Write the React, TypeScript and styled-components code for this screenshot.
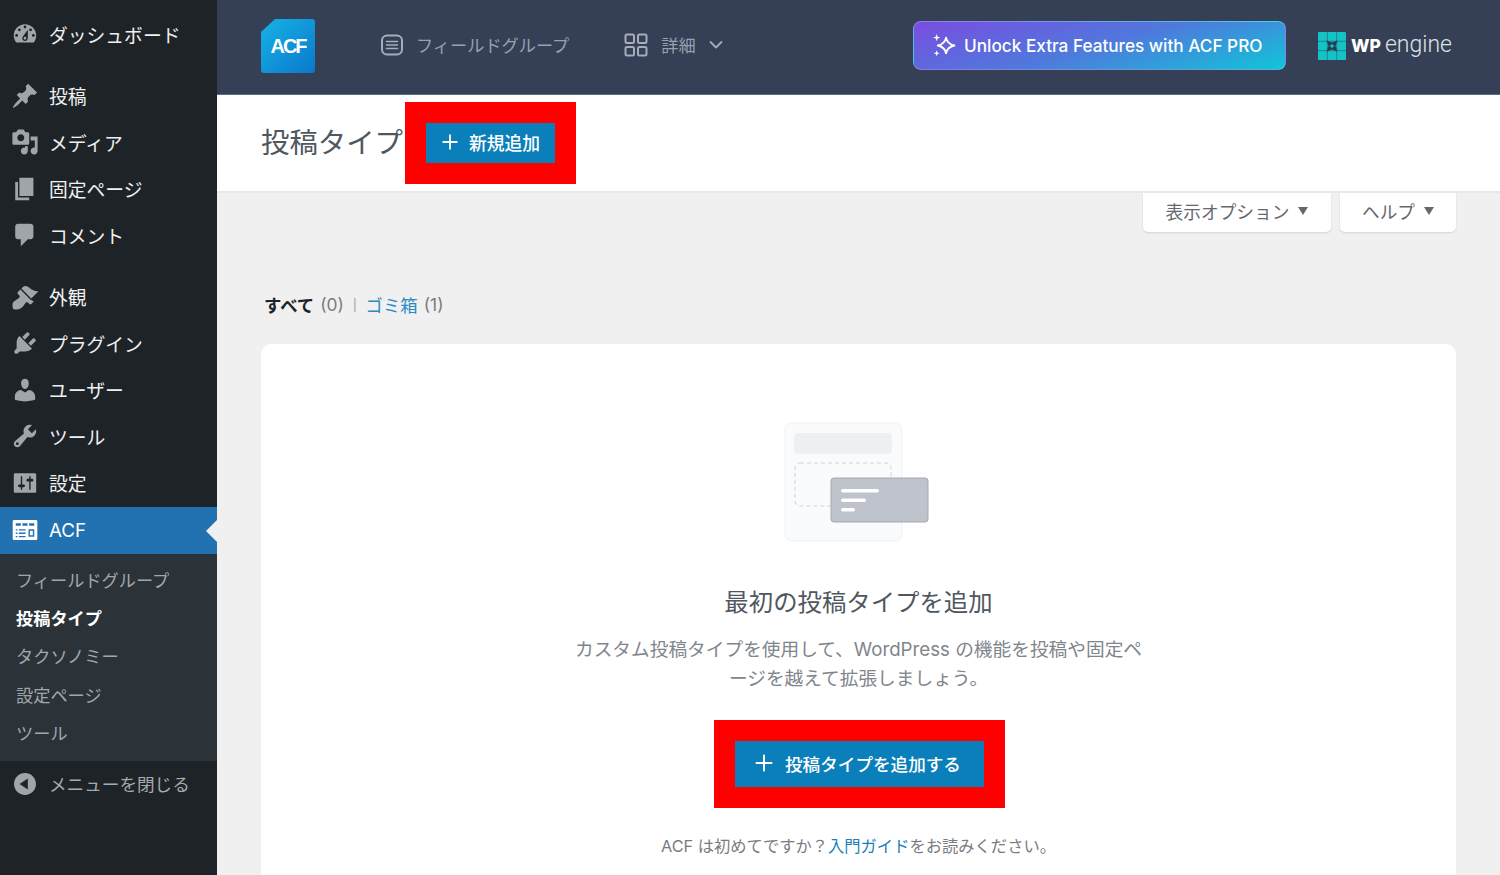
import React from 'react';
import styled, { createGlobalStyle } from 'styled-components';

const GlobalStyle = createGlobalStyle`
  html, body {
    margin: 0;
    padding: 0;
    height: 875px;
    overflow: hidden;
    background: #f0f0f1;
    font-family: Inter, "Noto Sans CJK JP", "Noto Sans", sans-serif;
  }
  * { box-sizing: border-box; }
`;

const Page = styled.div`
  display: flex;
  width: 1500px;
  height: 875px;
  overflow: hidden;
`;

/* admin menu */

const Sidebar = styled.nav`
  flex: 0 0 217px;
  background: #1d2327;
  padding-top: 12px;
  display: flex;
  flex-direction: column;
`;

const MenuGroup = styled.div`
  margin-bottom: 15px;
`;

const MenuItem = styled.div<{ $active?: boolean }>`
  position: relative;
  display: flex;
  align-items: center;
  gap: 10px;
  height: 46.5px;
  padding-left: 11px;
  padding-bottom: ${p => (p.$active ? 0 : 2)}px;
  font-size: 18.8px;
  color: ${p => (p.$active ? '#fff' : '#f0f0f1')};
  background: ${p => (p.$active ? '#2271b1' : 'transparent')};
  white-space: nowrap;
`;

const MenuIcon = styled.svg<{ $active?: boolean }>`
  flex: 0 0 28px;
  width: 28px;
  height: 28px;
  fill: ${p => (p.$active ? '#fff' : '#a0a5aa')};
`;

const ActiveArrow = styled.span`
  position: absolute;
  right: 0;
  top: 13px;
  border-style: solid;
  border-width: 11px 11px 11px 0;
  border-color: transparent #f0f0f1 transparent transparent;
`;

const SubMenu = styled.div`
  background: #2c3338;
  padding: 8.5px 0 8.5px;
`;

const SubItem = styled.div<{ $current?: boolean }>`
  height: 38.2px;
  line-height: 38.2px;
  padding-left: 16px;
  font-size: 17.2px;
  font-weight: ${p => (p.$current ? 700 : 400)};
  color: ${p => (p.$current ? '#fff' : '#a2a7ac')};
  white-space: nowrap;
`;

const CollapseItem = styled(MenuItem)`
  color: #a7aaad;
  font-size: 17.6px;
  height: 47px;
  padding-bottom: 2px;
`;

/* main column */

const Main = styled.main`
  flex: 1;
  min-width: 0;
  display: flex;
  flex-direction: column;
`;

const TopBar = styled.header`
  flex: 0 0 95px;
  display: flex;
  align-items: center;
  padding: 0 44px 3px 44px;
  background: #353f55;
  border-bottom: 1px solid #626b7e;
`;

const Logo = styled.div`
  flex: 0 0 54px;
  width: 54px;
  height: 54px;
  margin-right: 65px;
  margin-top: 1px;
  display: flex;
  align-items: center;
  justify-content: center;
  border-radius: 3px;
  background: linear-gradient(135deg, #17b3e6 0%, #0a78cc 100%);
  clip-path: polygon(26% 0, 100% 0, 100% 100%, 0 100%, 0 24%);
  color: #fff;
  font-family: "Liberation Sans", sans-serif;
  font-size: 20px;
  font-weight: 700;
  letter-spacing: -2px;
`;

const NavLink = styled.div<{ $gap: number; $end?: number }>`
  display: flex;
  align-items: center;
  gap: ${p => p.$gap}px;
  margin-right: ${p => p.$end ?? 0}px;
  padding-bottom: 2px;
  color: #98a1b0;
  font-size: 17.2px;
  white-space: nowrap;
`;

const NavIcon = styled.svg`
  width: 24px;
  height: 24px;
  fill: none;
  stroke: #a5adba;
  stroke-width: 2;
  stroke-linecap: round;
  stroke-linejoin: round;
`;

const Chevron = styled.svg`
  width: 14px;
  height: 14px;
  fill: none;
  stroke: #a5adba;
  stroke-width: 1.8;
  stroke-linecap: round;
  stroke-linejoin: round;
`;

const ProButton = styled.div`
  margin-left: auto;
  width: 373px;
  height: 49px;
  display: flex;
  align-items: center;
  gap: 7px;
  padding-left: 18px;
  border-radius: 8px;
  border: 1px solid rgba(255, 255, 255, 0.22);
  background: linear-gradient(165deg, #7a4ce0 0%, #4f79dc 50%, #0fc6d8 100%);
  color: #fff;
  font-size: 17.2px;
  font-weight: 500;
  white-space: nowrap;
`;

const Sparkle = styled.svg`
  width: 25px;
  height: 25px;
  fill: none;
  stroke: #fff;
  stroke-width: 1.8;
  stroke-linejoin: round;
`;

const WpEngine = styled.div`
  margin-left: 32px;
  display: flex;
  align-items: center;
  width: 138px;
  color: #fff;
  white-space: nowrap;
`;

const WpMark = styled.svg`
  width: 28px;
  height: 28px;
  margin-right: 5px;
`;

const WpBold = styled.span`
  font-size: 17.5px;
  font-weight: 800;
  margin-right: 4px;
`;

const WpLight = styled.span`
  font-family: Roboto, sans-serif;
  font-size: 23px;
  font-weight: 300;
  color: #dfe3e8;
  position: relative;
  top: -1px;
`;

const TitleBar = styled.div`
  flex: 0 0 98px;
  display: flex;
  align-items: center;
  padding-left: 44px;
  background: #fff;
  border-bottom: 2px solid #e8e8e9;
`;

const Title = styled.h1`
  margin: 0 2px 5px 0;
  font-size: 28.4px;
  font-weight: 400;
  color: #50575e;
  white-space: nowrap;
`;

const AddButton = styled.div<{ $large?: boolean }>`
  display: flex;
  align-items: center;
  justify-content: center;
  gap: ${p => (p.$large ? 11 : 10)}px;
  width: ${p => (p.$large ? 291 : 171)}px;
  height: ${p => (p.$large ? 88 : 82)}px;
  margin-left: ${p => (p.$large ? 2 : 0)}px;
  padding-bottom: 2px;
  padding-right: ${p => (p.$large ? 4 : 0)}px;
  border: 21px solid #ff0000;
  background: #0b7fb9;
  background-clip: padding-box;
  color: #fff;
  font-size: ${p => (p.$large ? 17.6 : 17.8)}px;
  font-weight: 500;
  white-space: nowrap;
`;

const PlusIcon = styled.svg<{ $size: number }>`
  width: ${p => p.$size}px;
  height: ${p => p.$size}px;
  stroke: #fff;
  stroke-width: 2;
  stroke-linecap: round;
`;

const Content = styled.div`
  flex: 1;
  padding: 0 44px;
  display: flex;
  flex-direction: column;
  min-height: 0;
`;

const ScreenTabs = styled.div`
  display: flex;
  justify-content: flex-end;
  gap: 9px;
`;

const ScreenTab = styled.div<{ $width: number }>`
  width: ${p => p.$width}px;
  height: 39px;
  display: flex;
  align-items: center;
  justify-content: center;
  gap: 9px;
  padding-bottom: 4px;
  background: #fff;
  border-radius: 0 0 5px 5px;
  box-shadow: 0 1px 2px rgba(0, 0, 0, 0.12);
  color: #646970;
  font-size: 17.7px;
  white-space: nowrap;
`;

const Caret = styled.span`
  width: 0;
  height: 0;
  border-style: solid;
  border-width: 8px 5.5px 0 5.5px;
  border-color: #646970 transparent transparent transparent;
`;

const SubSub = styled.div`
  display: flex;
  align-items: center;
  height: 28px;
  margin: 58px 0 26px 3px;
  font-size: 17.4px;
  color: #787c82;
  white-space: nowrap;
`;

const SubCurrent = styled.strong`
  color: #1d2327;
  font-weight: 700;
  margin-right: 6px;
`;

const SubSep = styled.span`
  margin: 0 9px;
  font-family: "Liberation Sans", sans-serif;
  font-size: 14px;
  color: #a7aaad;
`;

const SubLink = styled.span`
  color: #2a8bc2;
  margin-right: 6px;
`;

const Card = styled.section`
  flex: 1;
  display: flex;
  flex-direction: column;
  align-items: center;
  padding-top: 78px;
  background: #fff;
  border-radius: 11px 11px 0 0;
`;

const Illustration = styled.svg`
  width: 148px;
  height: 122px;
  margin-left: -2px;
  margin-bottom: 40px;
`;

const EmptyTitle = styled.h2`
  margin: 0 0 15px;
  font-size: 24.4px;
  line-height: 36px;
  font-weight: 400;
  color: #50575e;
`;

const EmptyText = styled.p`
  margin: 0 0 27px;
  text-align: center;
  font-size: 18.7px;
  line-height: 29px;
  color: #80858c;
  white-space: nowrap;
`;

const GuideText = styled.p`
  margin: 24px 0 0;
  font-size: 16.3px;
  line-height: 28px;
  color: #787c82;
  white-space: nowrap;
`;

const GuideLink = styled.span`
  color: #1a7fbd;
`;

const icons = {
  dashboard: 'M3.76 16h12.48c1.1-1.37 1.76-3.11 1.76-5 0-4.42-3.58-8-8-8s-8 3.58-8 8c0 1.89.66 3.63 1.76 5zM10 4c.55 0 1 .45 1 1s-.45 1-1 1-1-.45-1-1 .45-1 1-1zM6 6c.55 0 1 .45 1 1s-.45 1-1 1-1-.45-1-1 .45-1 1-1zm8 0c.55 0 1 .45 1 1s-.45 1-1 1-1-.45-1-1 .45-1 1-1zm-5.37 5.55L12 7v6c0 1.1-.9 2-2 2s-2-.9-2-2c0-.57.24-1.08.63-1.45zM4 10c.55 0 1 .45 1 1s-.45 1-1 1-1-.45-1-1 .45-1 1-1zm12 0c.55 0 1 .45 1 1s-.45 1-1 1-1-.45-1-1 .45-1 1-1zm-5 3c0-.55-.45-1-1-1s-1 .45-1 1 .45 1 1 1 1-.45 1-1z',
  post: 'M10.44 3.02l1.82-1.82 6.36 6.35-1.83 1.82c-1.05-.68-2.48-.57-3.41.36l-.75.75c-.92.93-1.04 2.35-.35 3.41l-1.83 1.82-2.41-2.41-2.8 2.79c-.42.42-3.38 2.71-3.8 2.29s1.86-3.39 2.28-3.81l2.79-2.79L4.1 9.36l1.83-1.82c1.05.69 2.48.57 3.4-.36l.75-.75c.93-.92 1.05-2.35.36-3.41z',
  media: 'M13 11V4c0-.55-.45-1-1-1h-1.67L9 1H5L3.67 3H2c-.55 0-1 .45-1 1v7c0 .55.45 1 1 1h10c.55 0 1-.45 1-1zM7 4.5c1.38 0 2.5 1.12 2.5 2.5S8.38 9.5 7 9.5 4.5 8.38 4.5 7 5.62 4.5 7 4.5zM14 6h5v10.5c0 1.38-1.12 2.5-2.5 2.5S14 17.88 14 16.5s1.12-2.5 2.5-2.5c.17 0 .34.02.5.05V9h-3V6zm-4 8.05V13h2v3.5c0 1.38-1.12 2.5-2.5 2.5S7 17.88 7 16.5 8.12 14 9.5 14c.17 0 .34.02.5.05z',
  page: 'M6 15V2h10v13H6zm-1 1h8v2H3V5h2v11z',
  comments: 'M5 2h9c1.1 0 2 .9 2 2v7c0 1.1-.9 2-2 2h-2l-5 5v-5H5c-1.1 0-2-.9-2-2V4c0-1.1.9-2 2-2z',
  appearance: 'M14.48 11.06L7.41 3.99l1.5-1.5c.5-.56 2.3-.47 3.51.32 1.21.8 1.43 1.28 2.91 2.1 1.18.64 2.45 1.26 4.45.85zm-.71.71L6.7 4.7 4.93 6.47c-.39.39-.39 1.02 0 1.41l1.06 1.06c.39.39.39 1.03 0 1.42-.6.6-1.43 1.11-2.21 1.69-.35.26-.7.53-1.01.84C1.43 13.23.5 15.1 1.5 18.5c3.4 1 5.27.07 6.61-1.27.31-.31.58-.66.84-1.01.58-.78 1.09-1.61 1.69-2.21.39-.39 1.03-.39 1.42 0l1.06 1.06c.39.39 1.02.39 1.41 0l1.77-1.77z',
  plugins: 'M13.11 4.36L9.87 7.6 8 5.73l3.24-3.24c.35-.34 1.05-.2 1.56.32.52.51.66 1.21.31 1.55zm-8 1.77l.91-1.12 9.01 9.01-1.19.84c-.71.71-2.63 1.16-3.82 1.16H6.14L4.9 17.26c-.59.59-1.54.59-2.12 0-.59-.58-.59-1.53 0-2.12l1.24-1.24v-3.88c0-1.13.4-3.19 1.09-3.89zm7.26 3.97l3.24-3.24c.34-.35 1.04-.21 1.55.31.52.51.66 1.21.31 1.55l-3.24 3.25z',
  users: 'M10 9.25c-2.27 0-2.73-3.44-2.73-3.44C7 4.02 7.82 2 9.97 2c2.16 0 2.98 2.02 2.71 3.81 0 0-.41 3.44-2.68 3.44zm0 2.57L12.72 10c2.39 0 4.52 2.33 4.52 4.53v2.49s-3.65 1.13-7.24 1.13c-3.65 0-7.24-1.13-7.24-1.13v-2.49c0-2.25 1.94-4.48 4.47-4.48z',
  tools: 'M16.68 9.77c-1.34 1.34-3.3 1.67-4.95.99l-5.41 6.52c-.99.99-2.59.99-3.58 0s-.99-2.59 0-3.57l6.52-5.42c-.68-1.65-.35-3.61.99-4.95 1.28-1.28 3.12-1.62 4.72-1.06l-2.89 2.89 2.82 2.82 2.86-2.87c.53 1.58.18 3.39-1.08 4.65zM3.81 16.21c.4.39 1.04.39 1.43 0 .4-.4.4-1.04 0-1.43-.39-.4-1.03-.4-1.43 0-.39.39-.39 1.03 0 1.43z',
  settings: 'M18 16V4c0-.55-.45-1-1-1H3c-.55 0-1 .45-1 1v12c0 .55.45 1 1 1h14c.55 0 1-.45 1-1zM8 11h1c.55 0 1 .45 1 1s-.45 1-1 1H8v1.5c0 .28-.22.5-.5.5s-.5-.22-.5-.5V13H6c-.55 0-1-.45-1-1s.45-1 1-1h1V5.5c0-.28.22-.5.5-.5s.5.22.5.5V11zm5-2h-1c-.55 0-1-.45-1-1s.45-1 1-1h1V5.5c0-.28.22-.5.5-.5s.5.22.5.5V7h1c.55 0 1 .45 1 1s-.45 1-1 1h-1v5.5c0 .28-.22.5-.5.5s-.5-.22-.5-.5V9z',
  collapse: 'M10 2.16c4.33 0 7.84 3.51 7.84 7.84s-3.51 7.84-7.84 7.84S2.16 14.33 2.16 10 5.71 2.16 10 2.16zm2 11.72V6.12L6.18 9.97z',
  acf: 'M2.200 2.800h15.600a1 1 0 0 1 1 1v12.400a1 1 0 0 1-1 1H2.200a1 1 0 0 1-1-1V3.800a1 1 0 0 1 1-1zM3.400 7h3.600V5.200H3.400zm4.800 0h3.600V5.200H8.200zm4.800 0h3.600V5.200H13zM3.400 10.400h1.200V9.400H3.400zm2.200 0h4.800V9.400H5.600zm-2.200 2.400h1.200v-1H3.400zm2.200 0h4.800v-1H5.600zm-2.200 2.400h1.200v-1H3.400zm2.200 0h4.800v-1H5.600zm6.900-.400h4.100V9.500h-4.100zm1-1v-3.200h2.100v3.200z',
};

type IconName = keyof typeof icons;

const DashIcon = ({ name, active }: { name: IconName; active?: boolean }) => (
  <MenuIcon viewBox="0 0 20 20" $active={active}>
    <path d={icons[name]} fillRule="evenodd" />
  </MenuIcon>
);

const Plus = ({ size }: { size: number }) => (
  <PlusIcon $size={size} viewBox="0 0 20 20">
    <path d="M10 2.500v15M2.500 10h15" />
  </PlusIcon>
);

const menuTop: [IconName, string][] = [
  ['post', '投稿'],
  ['media', 'メディア'],
  ['page', '固定ページ'],
  ['comments', 'コメント'],
];

const menuMiddle: [IconName, string][] = [
  ['appearance', '外観'],
  ['plugins', 'プラグイン'],
  ['users', 'ユーザー'],
  ['tools', 'ツール'],
  ['settings', '設定'],
];

export default function App() {
  return (
    <Page>
      <GlobalStyle />
      <Sidebar>
        <MenuGroup>
          <MenuItem><DashIcon name="dashboard" />ダッシュボード</MenuItem>
        </MenuGroup>
        <MenuGroup>
          {menuTop.map(([icon, label]) => (
            <MenuItem key={label}><DashIcon name={icon} />{label}</MenuItem>
          ))}
        </MenuGroup>
        <div>
          {menuMiddle.map(([icon, label]) => (
            <MenuItem key={label}><DashIcon name={icon} />{label}</MenuItem>
          ))}
          <MenuItem $active>
            <DashIcon name="acf" active />ACF
            <ActiveArrow />
          </MenuItem>
        </div>
        <SubMenu>
          <SubItem>フィールドグループ</SubItem>
          <SubItem $current>投稿タイプ</SubItem>
          <SubItem>タクソノミー</SubItem>
          <SubItem>設定ページ</SubItem>
          <SubItem>ツール</SubItem>
        </SubMenu>
        <CollapseItem><DashIcon name="collapse" />メニューを閉じる</CollapseItem>
      </Sidebar>

      <Main>
        <TopBar>
          <Logo>ACF</Logo>
          <NavLink $gap={12} $end={55}>
            <NavIcon viewBox="0 0 24 24">
              <rect x="2" y="2.500" width="20" height="19" rx="5" />
              <path d="M6.500 8.500h11M6.500 12h11M6.500 15.500h11" strokeWidth="1.600" />
            </NavIcon>
            フィールドグループ
          </NavLink>
          <NavLink $gap={13}>
            <NavIcon viewBox="0 0 24 24">
              <rect x="1.500" y="1.500" width="8.500" height="8.500" rx="1.500" />
              <rect x="14" y="1.500" width="8.500" height="8.500" rx="1.500" />
              <rect x="1.500" y="14" width="8.500" height="8.500" rx="1.500" />
              <rect x="14" y="14" width="8.500" height="8.500" rx="1.500" />
            </NavIcon>
            詳細
            <Chevron viewBox="0 0 14 14"><path d="M1.500 4l5.500 5.500L12.500 4" /></Chevron>
          </NavLink>
          <ProButton>
            <Sparkle viewBox="0 0 24 24">
              <path d="M13.500 4.500c.8 4.300 3 6.500 8 7.500-5 1-7.200 3.200-8 7.500-.8-4.300-3-6.500-8-7.500 5-1 7.200-3.200 8-7.500z" />
              <path d="M4.500 1l.9 2.500 2.500.9-2.500.9-.9 2.500-.9-2.500-2.500-.9 2.500-.9zM4.500 16.500l.8 2.100 2.100.8-2.100.8-.8 2.100-.8-2.100-2.100-.8 2.100-.8z" fill="#fff" stroke="none" />
            </Sparkle>
            Unlock Extra Features with ACF PRO
          </ProButton>
          <WpEngine>
            <WpMark viewBox="0 0 28 28">
              <rect width="28" height="28" rx="1" fill="#12c4c6" />
              <path d="M9.300 0v28M18.700 0v28M0 9.300h28M0 18.700h28" stroke="#2a6f80" strokeWidth="0.8" />
              <path d="M8.500 8.500l5.500 2 5.500-2-2 5.500 2 5.500-5.500-2-5.500 2 2-5.500z" fill="#2b3a4f" />
              <circle cx="14" cy="14" r="1.800" fill="#12c4c6" />
            </WpMark>
            <WpBold>WP</WpBold>
            <WpLight>engine</WpLight>
          </WpEngine>
        </TopBar>

        <TitleBar>
          <Title>投稿タイプ</Title>
          <AddButton><Plus size={18} />新規追加</AddButton>
        </TitleBar>

        <Content>
          <ScreenTabs>
            <ScreenTab $width={188}>表示オプション<Caret /></ScreenTab>
            <ScreenTab $width={116}>ヘルプ<Caret /></ScreenTab>
          </ScreenTabs>

          <SubSub>
            <SubCurrent>すべて</SubCurrent>(0)
            <SubSep>|</SubSep>
            <SubLink>ゴミ箱</SubLink>(1)
          </SubSub>

          <Card>
            <Illustration viewBox="0 0 148 122">
              <rect x="1" y="1" width="117" height="118" rx="7" fill="#fafbfc" stroke="#f0f1f3" />
              <rect x="10" y="11" width="98" height="21" rx="4" fill="#eff0f2" />
              <rect x="11" y="41" width="96" height="43" rx="5" fill="none" stroke="#c9ccd2" strokeWidth="0.9" strokeDasharray="4 3" />
              <rect x="47" y="56" width="97" height="44" rx="3" fill="#bfc3cc" stroke="#a4a9b3" strokeWidth="1" />
              <rect x="57" y="67" width="38" height="3.500" rx="1.700" fill="#fff" />
              <rect x="57" y="76.500" width="25" height="3.500" rx="1.700" fill="#fff" />
              <rect x="57" y="86" width="14" height="3.500" rx="1.700" fill="#fff" />
            </Illustration>
            <EmptyTitle>最初の投稿タイプを追加</EmptyTitle>
            <EmptyText>
              カスタム投稿タイプを使用して、WordPress の機能を投稿や固定ペ<br />
              ージを越えて拡張しましょう。
            </EmptyText>
            <AddButton $large><Plus size={20} />投稿タイプを追加する</AddButton>
            <GuideText>ACF は初めてですか？<GuideLink>入門ガイド</GuideLink>をお読みください。</GuideText>
          </Card>
        </Content>
      </Main>
    </Page>
  );
}
